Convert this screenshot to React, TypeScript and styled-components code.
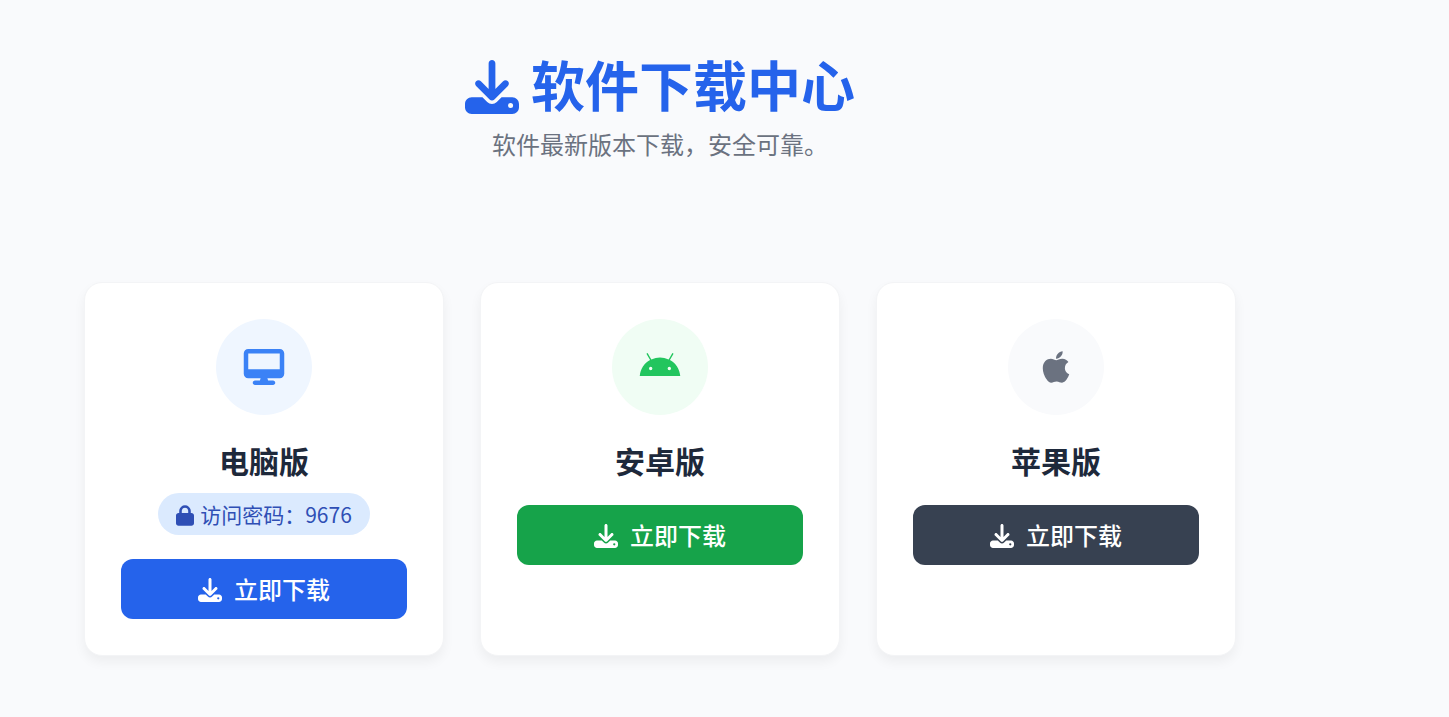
import React from "react";
import styled, { createGlobalStyle } from "styled-components";
import {
  FaAndroid,
  FaApple,
  FaDesktop,
  FaDownload,
  FaLock,
} from "react-icons/fa6";
import type { IconType } from "react-icons";

const GlobalStyle = createGlobalStyle`
  *, *::before, *::after { box-sizing: border-box; }
  body {
    margin: 0;
    background: #f9fafc;
    color: #1f2937;
    font-family: "Noto Sans CJK SC", sans-serif;
    line-height: 1.5;
  }
  h1, h2, p { margin: 0; }
`;

const Page = styled.main`
  max-width: 1320px;
  padding: 48px 84px 60px;
`;

const Header = styled.header`
  text-align: center;
  margin-bottom: 120px;
`;

const Title = styled.h1`
  margin-bottom: 6px;
  font-size: 54px;
  line-height: 72px;
  font-weight: 700;
  color: #2563eb;

  svg {
    margin-right: 12px;
    vertical-align: -0.125em;
  }
`;

const Subtitle = styled.p`
  font-size: 24px;
  line-height: 36px;
  color: #6b7280;
`;

const CardGrid = styled.section`
  display: grid;
  grid-template-columns: repeat(auto-fit, minmax(300px, 1fr));
  gap: 36px;
`;

const Card = styled.article`
  display: flex;
  flex-direction: column;
  align-items: center;
  padding: 36px;
  border: 1px solid #f3f4f6;
  border-radius: 18px;
  background: #ffffff;
  box-shadow: 0 6px 12px rgba(0, 0, 0, 0.05);
`;

const IconCircle = styled.div<{ $color: string; $background: string }>`
  display: flex;
  align-items: center;
  justify-content: center;
  width: 96px;
  height: 96px;
  margin-bottom: 24px;
  border-radius: 50%;
  color: ${(p) => p.$color};
  background: ${(p) => p.$background};

  svg {
    width: 42px;
    height: 36px;
  }
`;

const CardInfo = styled.div`
  display: flex;
  flex-direction: column;
  align-items: center;
  gap: 12px;
  margin-bottom: 24px;
`;

const CardTitle = styled.h2`
  font-size: 30px;
  line-height: 42px;
  font-weight: 700;
  color: #1e293b;
`;

const PasswordBadge = styled.p`
  padding: 0 18px;
  border-radius: 21px;
  font-size: 21px;
  line-height: 42px;
  white-space: nowrap;
  color: #2f4fb5;
  background: #dbeafe;

  svg {
    width: 18px;
    margin-right: 6px;
    vertical-align: -0.125em;
  }
`;

const DownloadLink = styled.a<{ $background: string }>`
  width: 100%;
  padding: 12px 24px;
  border-radius: 12px;
  font-size: 24px;
  line-height: 36px;
  font-weight: 500;
  text-align: center;
  text-decoration: none;
  color: #ffffff;
  background: ${(p) => p.$background};

  svg {
    margin-right: 12px;
    vertical-align: -0.125em;
  }
`;

interface Platform {
  name: string;
  icon: IconType;
  color: string;
  tint: string;
  button: string;
  password?: string;
}

const platforms: Platform[] = [
  {
    name: "电脑版",
    icon: FaDesktop,
    color: "#3b82f6",
    tint: "#eff6ff",
    button: "#2563eb",
    password: "9676",
  },
  {
    name: "安卓版",
    icon: FaAndroid,
    color: "#22c55e",
    tint: "#f0fdf4",
    button: "#16a34a",
  },
  {
    name: "苹果版",
    icon: FaApple,
    color: "#6b7280",
    tint: "#f9fafc",
    button: "#374151",
  },
];

function PlatformCard({ platform }: { platform: Platform }) {
  const Icon = platform.icon;
  return (
    <Card>
      <IconCircle $color={platform.color} $background={platform.tint}>
        <Icon aria-hidden />
      </IconCircle>
      <CardInfo>
        <CardTitle>{platform.name}</CardTitle>
        {platform.password && (
          <PasswordBadge>
            <FaLock aria-hidden />
            访问密码：{platform.password}
          </PasswordBadge>
        )}
      </CardInfo>
      <DownloadLink href="#" $background={platform.button}>
        <FaDownload aria-hidden />
        立即下载
      </DownloadLink>
    </Card>
  );
}

export default function App() {
  return (
    <>
      <GlobalStyle />
      <Page>
        <Header>
          <Title>
            <FaDownload aria-hidden />
            软件下载中心
          </Title>
          <Subtitle>软件最新版本下载，安全可靠。</Subtitle>
        </Header>
        <CardGrid>
          {platforms.map((platform) => (
            <PlatformCard key={platform.name} platform={platform} />
          ))}
        </CardGrid>
      </Page>
    </>
  );
}
